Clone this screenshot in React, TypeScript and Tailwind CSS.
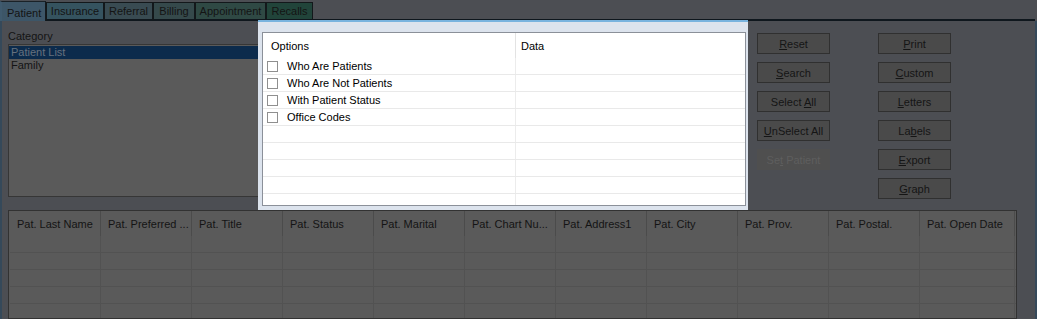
import React from "react";

const tabs = [
  { label: "Insurance", w: "w-[58px]", bg: "bg-[#35535f]" },
  { label: "Referral", w: "w-[49px]", bg: "bg-[#394b52]" },
  { label: "Billing", w: "w-[42px]", bg: "bg-[#35494b]" },
  { label: "Appointment", w: "w-[71px]", bg: "bg-[#2f4944]" },
  { label: "Recalls", w: "w-[47px]", bg: "bg-[#21443a]" },
];

const columns = [
  "Pat. Last Name",
  "Pat. Preferred ...",
  "Pat. Title",
  "Pat. Status",
  "Pat. Marital",
  "Pat. Chart Nu...",
  "Pat. Address1",
  "Pat. City",
  "Pat. Prov.",
  "Pat. Postal.",
];

const options = ["Who Are Patients", "Who Are Not Patients", "With Patient Status", "Office Codes", "", "", "", "", ""];

function Btn({ pre, u, post, disabled }: { pre: string; u: string; post: string; disabled?: boolean }) {
  return (
    <div
      className={
        disabled
          ? "flex h-[21px] w-[73px] items-center justify-center border border-[#4f4f4f] bg-[#4f4f4f] pt-[1px] text-[#5e5e5e]"
          : "flex h-[21px] w-[73px] items-center justify-center border border-[#303030] bg-[#4a4a4a] pt-[1px] text-[#151515]"
      }
    >
      <span>
        {pre}
        <span className="underline underline-offset-[1px]">{u}</span>
        {post}
      </span>
    </div>
  );
}

export default function App() {
  return (
    <div className="relative h-[319px] w-[1037px] overflow-hidden bg-[#4c4e53] font-['Liberation_Sans',Arial,sans-serif] text-[11px] leading-[13px] text-[#141414]">
      {/* Tab strip */}
      <div className="flex h-[21px] items-end">
        <div className="h-[20px] w-[46px] border-l-2 border-r border-t border-l-[#3f5a6e] border-r-[#141a1e] border-t-[#1a2228] bg-[#3d5668] pl-[5px] pt-[5px]">
          Patient
        </div>
        {tabs.map((t) => (
          <div
            key={t.label}
            className={`h-[19px] ${t.w} ${t.bg} border-x border-t border-b-2 border-x-[#13181b] border-t-[#13181b] border-b-[#0f171d] pt-[2px] text-center`}
          >
            {t.label}
          </div>
        ))}
        <div className="h-[2px] flex-1 bg-[#0f171d]" />
        <div className="w-[2px]" />
      </div>

      {/* Tab page */}
      <div className="flex h-[298px] flex-col border-x-2 border-[#35495a]">
        <div className="flex items-start pl-[6px]">
          <div className="w-[251px] pt-[9px]">
            <div className="h-[13px]">Category</div>
            <div className="mt-[1px] h-[153px] border border-[#363636] bg-[#5a5a5a] pt-[1px]">
              <div className="h-[13px] bg-[#0c2b4c] pl-[2px] text-[#66717e]">Patient List</div>
              <div className="h-[13px] pl-[2px]">Family</div>
            </div>
          </div>
          <div className="ml-[498px] flex gap-[48px] pt-[12px]">
            <div className="flex flex-col gap-[8px]">
              <Btn pre="" u="R" post="eset" />
              <Btn pre="" u="S" post="earch" />
              <Btn pre="Select " u="A" post="ll" />
              <Btn pre="" u="U" post="nSelect All" />
              <Btn pre="Se" u="t" post=" Patient" disabled />
            </div>
            <div className="flex flex-col gap-[8px]">
              <Btn pre="" u="P" post="rint" />
              <Btn pre="" u="C" post="ustom" />
              <Btn pre="" u="L" post="etters" />
              <Btn pre="La" u="b" post="els" />
              <Btn pre="" u="E" post="xport" />
              <Btn pre="" u="G" post="raph" />
            </div>
          </div>
        </div>

        {/* Results grid */}
        <div className="ml-[6px] mt-[11px] w-[1009px] flex-1 overflow-hidden border border-[#323232] bg-[#5a5a5a] pl-[1px]">
          <div className="flex h-[25px]">
            {columns.map((c) => (
              <div key={c} className="flex w-[91px] items-center whitespace-nowrap border-r border-[#4b4b4b] pl-[7px] pt-[1px]">
                {c}
              </div>
            ))}
            <div className="flex w-[95px] items-center whitespace-nowrap border-r border-[#4b4b4b] pl-[7px] pt-[1px]">
              Pat. Open Date
            </div>
          </div>
          {[0, 1, 2, 3, 4, 5].map((r) => (
            <div key={r} className="flex h-[17px] border-b border-[#525252]">
              {columns.map((c) => (
                <div key={c} className="w-[91px] border-r border-[#525252]" />
              ))}
              <div className="w-[95px] border-r border-[#525252]" />
            </div>
          ))}
        </div>
      </div>

      {/* Options dialog overlay */}
      <div className="absolute left-[258px] top-[20px] h-[190px] w-[490px] border-t-2 border-[#79b3de] bg-[#dce3ed] pl-[4px] pt-[10px]">
        <div className="h-[174px] w-[484px] overflow-hidden border border-[#8b9099] bg-white text-black">
          <div className="flex h-[25px]">
            <div className="flex w-[253px] items-center border-r border-[#e3e3e3] pl-[8px] pt-[1px]">Options</div>
            <div className="flex flex-1 items-center pl-[5px] pt-[1px]">Data</div>
          </div>
          {options.map((o, i) => (
            <div key={i} className="flex h-[17px] border-b border-[#e9e9e9]">
              <div className="flex w-[253px] items-center border-r border-[#ececec] pl-[4px]">
                {o && (
                  <>
                    <div className="h-[11px] w-[11px] border border-[#8f8f8f] bg-white" />
                    <span className="ml-[9px] pt-[1px]">{o}</span>
                  </>
                )}
              </div>
              <div className="flex-1" />
            </div>
          ))}
        </div>
      </div>
    </div>
  );
}
